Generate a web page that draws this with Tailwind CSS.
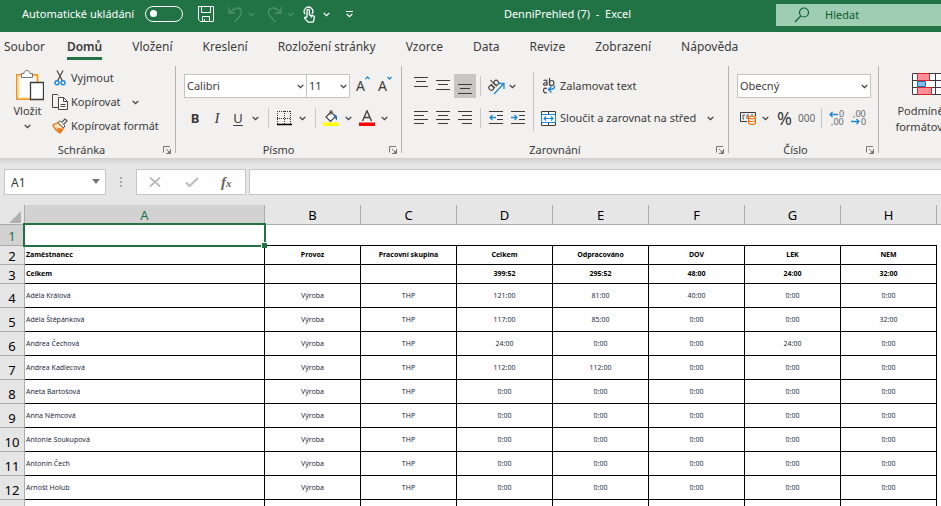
<!DOCTYPE html>
<html lang="cs">
<head>
<meta charset="utf-8">
<title>DenniPrehled (7) - Excel</title>
<script src="https://cdn.jsdelivr.net/npm/@tailwindcss/browser@4"></script>
</head>
<body class="h-screen overflow-hidden flex flex-col bg-[#e6e6e6] font-['Noto_Sans','Open_Sans',sans-serif] text-[11px] leading-4 text-[#3b3b3b]">
<svg class="hidden" aria-hidden="true">
  <symbol id="chev" viewBox="0 0 7 5"><path d="M.7 .9 3.5 3.6 6.3 .9" fill="none" stroke="currentColor" stroke-width="1.3"/></symbol>
  <symbol id="launch" viewBox="0 0 8 8"><path d="M.5 6.500V.5H7M3 3l4 4M7.500 3v4.500H3" fill="none" stroke="currentColor"/><path d="M7.500 4v3.500H4z" fill="currentColor"/></symbol>
</svg>

<header class="h-8 shrink-0 flex items-center bg-[#217346] text-white overflow-hidden">
  <div class="flex-1 flex items-center pl-[22px] pb-1 min-w-0">
    <label for="autosave" class="whitespace-nowrap w-[123px]">Automatické ukládání</label>
    <input id="autosave" type="checkbox" role="switch" class="appearance-none shrink-0 w-[38px] h-4 rounded-full border border-white before:block before:content-[''] before:size-[7px] before:rounded-full before:bg-white before:mt-[3px] before:ml-1">
    <button aria-label="Uložit" class="ml-[15px] shrink-0"><svg class="size-4" viewBox="0 0 16 16" fill="none" stroke="#fff"><path d="M.5.5h15v15H2.500L.5 13.500zM3.500.5v6h9v-6M4.500 15.500v-5h7v5M6.500 13v2.500"/></svg></button>
    <button aria-label="Zpět" class="ml-[14px] shrink-0 flex items-center gap-1 text-[#4d9169]"><svg class="w-4 h-[17px]" viewBox="0 0 16 17" fill="none" stroke="currentColor" stroke-width="1.300"><path d="M1 1v6h6M1.300 6.700C5 3.500 7 1.800 9.500 2c4 .3 5.300 4.500 3 7.500L6.500 16"/></svg><svg class="w-[7px] h-[5px]"><use href="#chev"/></svg></button>
    <button aria-label="Znovu" class="ml-3 shrink-0 flex items-center gap-1 text-[#4d9169]"><svg class="w-4 h-[17px]" viewBox="0 0 16 17" fill="none" stroke="currentColor" stroke-width="1.300"><path d="M14 1v6H8M13.700 6.700C11 3.500 8 1.800 5.500 2c-4 .3-5.300 4.500-3 7.500L8.500 16"/></svg><svg class="w-[7px] h-[5px]"><use href="#chev"/></svg></button>
    <button aria-label="Režim dotyku" class="ml-[9px] shrink-0 flex items-center gap-2"><svg class="w-3 h-[17px]" viewBox="0 0 12 17" fill="none" stroke="#fff" stroke-width="1.300"><path d="M2.200 8.200A4.300 4.300 0 1 1 9 8M4 11V4.600a1.200 1.200 0 0 1 2.400 0V9l4 .9c.8.2 1 .8.900 1.500l-.5 3.100c-.2 1-.6 1.700-1.700 1.700H6c-.8 0-1.300-.4-1.800-1L1.500 12c.6-1 1.600-1 2.500-.2M8.300 9.300v2.500"/></svg><svg class="w-[7px] h-[5px]"><use href="#chev"/></svg></button>
    <button aria-label="Přizpůsobit panel nástrojů" class="ml-4 shrink-0"><svg class="w-[7px] h-[7px]" viewBox="0 0 7 7" fill="none" stroke="#fff"><path d="M0 .5h7M.7 3l2.800 2.700L6.300 3" stroke-width="1.200"/></svg></button>
  </div>
  <h1 class="shrink-0 whitespace-pre w-[133px] text-center pb-1">DenniPrehled (7)  -  Excel</h1>
  <div class="w-[307px] shrink-0 flex justify-end">
    <div class="flex items-center w-[165px] h-[22px] bg-[#9fcdb3] text-[#0e5c2f] mb-[3px]">
      <svg class="w-4 h-4 ml-[18px]" viewBox="0 0 16 16" fill="none" stroke="currentColor" stroke-width="1.200"><circle cx="10" cy="5.500" r="4.500"/><path d="M6.800 8.800 1 15"/></svg>
      <input aria-label="Hledat" placeholder="Hledat" class="ml-[15px] w-24 bg-transparent outline-none placeholder:text-[#0e5c2f] placeholder:opacity-100">
    </div>
  </div>
</header>

<nav class="h-8 shrink-0 bg-[#f3f1f0] flex items-center gap-[30px] pl-1 pb-[2px] text-xs whitespace-nowrap">
  <a href="#" class="-mr-2">Soubor</a>
  <a href="#" class="font-semibold relative after:absolute after:content-[''] after:inset-x-0 after:top-[18px] after:h-[3px] after:bg-[#217346]">Domů</a>
  <a href="#">Vložení</a><a href="#">Kreslení</a><a href="#">Rozložení stránky</a><a href="#">Vzorce</a><a href="#">Data</a><a href="#">Revize</a><a href="#">Zobrazení</a><a href="#">Nápověda</a>
</nav>

<div class="shrink-0 flex bg-[#f3f1f0] pt-[2px] pb-[5px] h-[94px] whitespace-nowrap overflow-hidden">
  <!-- Schránka -->
  <section class="w-[176px] shrink-0 flex flex-col border-r border-[#b5b3b1]">
    <div class="h-[72px] shrink-0 flex">
      <button class="w-[52px] pl-[3px] pt-1 flex flex-col items-center">
        <svg class="w-7 h-[31px] ml-1" viewBox="0 0 28 31" fill="none"><path d="M2 5.500h20v23H2z" fill="#fdfdfd" stroke="#ffd98c" stroke-width="2.500"/><path d="M.6 4.600h20.800v24.800H.6z" stroke="#e8912d" stroke-width="1.200"/><path d="M5.500 7.500v-4H8C8 1.500 9.500.5 11 .5s3 1 3 3h2.500v4z" fill="#fff" stroke="#777"/><path d="M14.500 12.500h13v17h-13z" fill="#fff" stroke="#3b3b3b" stroke-width="1.300"/></svg>
        <span class="mt-[2px]">Vložit</span>
        <svg class="w-[7px] h-[5px] mt-[5px]"><use href="#chev"/></svg>
      </button>
      <div class="flex-1 flex flex-col">
        <button class="h-6 flex items-center"><svg class="w-[19px] h-4 shrink-0" viewBox="0 0 19 16" fill="none"><path d="M5 .5l5.500 10.500M11 .5 5.500 11" stroke="#555" stroke-width="1.400"/><circle cx="5" cy="12.800" r="2" stroke="#1e88d2" stroke-width="1.400"/><circle cx="11" cy="12.800" r="2" stroke="#1e88d2" stroke-width="1.400"/></svg>Vyjmout</button>
        <button class="h-6 flex items-center"><svg class="w-[19px] h-4 shrink-0" viewBox="0 0 19 16" fill="none" stroke="#444"><path d="M6 13.500H.5V.5h5l1 1"/><path d="M6.500 3.500h5l4 4v8h-9z" fill="#fff"/><path d="M11.500 3.500v4h4M8.500 10.500h5M8.500 12.500h5"/></svg>Kopírovat<svg class="w-[7px] h-[5px] ml-[11px]"><use href="#chev"/></svg></button>
        <button class="h-6 flex items-center"><svg class="w-[19px] h-4 shrink-0" viewBox="0 0 19 16" fill="none"><path d="m1 7 5-2.500 5.500 5.500L8 15C5 13 2 10.500 1 7z" fill="#ffe7bd" stroke="#e8720c" stroke-width="1.300"/><path d="m4.500 9.500 6 1.500L8 15z" fill="#e8720c"/><path d="m6 4.500 2-1.800L13 8l-1.500 2z" fill="#fff" stroke="#555"/><path d="M9.500 4.500 13 1l2 1.800-3.500 3.700" fill="#fff" stroke="#555" stroke-width="1.200"/></svg>Kopírovat formát</button>
      </div>
    </div>
    <footer class="flex shrink-0 items-center justify-between h-4 mt-1"><span class="flex-1 text-center pl-2 pr-4">Schránka</span><button aria-label="Schránka – možnosti" class="mr-1 -ml-2"><svg class="size-2 text-[#777]"><use href="#launch"/></svg></button></footer>
  </section>

  <!-- Písmo -->
  <section class="w-[226px] shrink-0 flex flex-col border-r border-[#b5b3b1]">
    <div class="h-[72px] shrink-0 pl-2 pt-2 flex flex-col gap-2">
      <div class="flex items-center h-6">
        <div class="relative"><select aria-label="Písmo" class="appearance-none block w-[123px] h-6 pl-[2px] bg-white border border-[#c6c4c2]"><option>Calibri</option></select><svg class="absolute right-[3px] top-[10px] w-[7px] h-[5px] pointer-events-none"><use href="#chev"/></svg></div>
        <div class="relative"><select aria-label="Velikost písma" class="appearance-none block w-[43px] h-6 pl-[2px] bg-white border border-l-0 border-[#c6c4c2]"><option>11</option></select><svg class="absolute right-[3px] top-[10px] w-[7px] h-[5px] pointer-events-none"><use href="#chev"/></svg></div>
        <button aria-label="Zvětšit písmo" class="ml-[6px] flex text-sm"><span>A</span><svg class="w-[5px] h-1" viewBox="0 0 5 4"><path d="M.5 3 2.500 1l2 2" fill="none" stroke="#1e88d2" stroke-width="1.300"/></svg></button>
        <button aria-label="Zmenšit písmo" class="ml-[8px] flex text-sm"><span>A</span><svg class="w-[5px] h-1" viewBox="0 0 5 4"><path d="M.5 1l2 2 2-2" fill="none" stroke="#1e88d2" stroke-width="1.300"/></svg></button>
      </div>
      <div class="flex items-center h-6 text-[13px]">
        <button class="w-[22px] font-bold">B</button>
        <button class="w-[22px] italic font-['Liberation_Serif',serif] text-[15px]">I</button>
        <button class="w-[20px] underline underline-offset-2">U</button>
        <button aria-label="Podtržení" class="ml-1"><svg class="w-[7px] h-[5px]"><use href="#chev"/></svg></button>
        <i class="w-px h-5 bg-[#c9c7c5] ml-[9px]"></i>
        <button aria-label="Ohraničení" class="ml-[7px] flex items-center gap-[7px]"><svg class="size-4" viewBox="0 0 16 16" fill="none" stroke="#333"><path d="M1 1.500h14M1 8.500h14M1.500 1v13M8.500 1v13M14.500 1v13" stroke-dasharray="1 1"/><path d="M1 14.500h15" stroke="#000" stroke-width="1.500"/></svg><svg class="w-[7px] h-[5px]"><use href="#chev"/></svg></button>
        <i class="w-px h-5 bg-[#c9c7c5] ml-[9px]"></i>
        <button aria-label="Barva výplně" class="ml-[7px] flex items-center gap-[6px]"><svg class="w-4 h-4" viewBox="0 0 16 16" fill="none"><path d="m3 7 5-5 4.500 4.500-5 5z" fill="#fff" stroke="#444" stroke-width="1.200"/><path d="M7 5V1.500C7 .3 9 .3 9 1.500v2" stroke="#444"/><path d="M11 4.500c3 0 4 3 2.500 6-1 0-.5-3-2.500-4z" fill="#1e6fb8"/><path d="M0 12.500h16v3.500H0z" fill="#ff0"/></svg><svg class="w-[7px] h-[5px]"><use href="#chev"/></svg></button>
        <button aria-label="Barva písma" class="ml-[7px] flex items-center gap-[6px]"><svg class="w-4 h-4" viewBox="0 0 16 16" fill="none"><path d="M3.500 11 8 .8 12.500 11M5 7.500h6" stroke="#444" stroke-width="1.400"/><path d="M0 12.500h16v3.500H0z" fill="#f00"/></svg><svg class="w-[7px] h-[5px]"><use href="#chev"/></svg></button>
      </div>
    </div>
    <footer class="flex shrink-0 items-center h-4 mt-1"><span class="flex-1 text-center pr-4">Písmo</span><button aria-label="Písmo – možnosti" class="mr-1 -ml-2"><svg class="size-2 text-[#777]"><use href="#launch"/></svg></button></footer>
  </section>

  <!-- Zarovnání -->
  <section class="w-[327px] shrink-0 flex flex-col border-r border-[#b5b3b1]">
    <div class="h-[72px] shrink-0 flex">
      <div class="w-[132px] h-[66px] flex flex-col gap-2 pl-2 pt-2 relative after:absolute after:content-[''] after:right-0 after:top-[6px] after:h-[59px] after:w-px after:bg-[#c9c7c5]">
        <div class="flex items-center h-6 shrink-0">
          <button aria-label="Zarovnat nahoru" class="w-[22px] h-6 flex justify-center"><svg class="w-[14px] h-6" viewBox="0 0 14 24" stroke="#3b3b3b"><path d="M0 3.500h14M2 7.500h10M0 12.500h14"/></svg></button>
          <button aria-label="Zarovnat na střed svisle" class="w-[22px] h-6 flex justify-center"><svg class="w-[14px] h-6" viewBox="0 0 14 24" stroke="#3b3b3b"><path d="M0 6.500h14M2 10.500h10M0 15.500h14"/></svg></button>
          <button aria-label="Zarovnat dolů" aria-pressed="true" class="w-[22px] h-6 flex justify-center bg-[#c8c6c4]"><svg class="w-[14px] h-6" viewBox="0 0 14 24" stroke="#3b3b3b"><path d="M0 10.500h14M2 14.500h10M0 19.500h14"/></svg></button>
          <i class="w-px h-5 bg-[#c9c7c5] ml-1"></i>
          <button aria-label="Orientace" class="ml-[7px] flex items-center gap-1"><svg class="w-[17px] h-[17px] overflow-visible" viewBox="0 0 17 17"><g transform="rotate(-45 6 7)" fill="none" stroke="#444" stroke-width="1.100"><ellipse cx="2" cy="7" rx="2.200" ry="2.500"/><path d="M4.500 4v6"/><path d="M7 1v9"/><ellipse cx="9.300" cy="7" rx="2.200" ry="2.500"/></g><path d="M6 16 15.500 6M10.500 5.500h5.500V11" fill="none" stroke="#1e88d2" stroke-width="1.300"/></svg><svg class="w-[7px] h-[5px]"><use href="#chev"/></svg></button>
        </div>
        <div class="flex items-center h-6 shrink-0">
          <button aria-label="Zarovnat vlevo" class="w-[22px] flex justify-center"><svg class="w-[14px] h-[14px]" viewBox="0 0 14 14" stroke="#3b3b3b"><path d="M0 .5h14M0 4.500h10M0 8.500h14M0 12.500h10"/></svg></button>
          <button aria-label="Na střed" class="w-[22px] flex justify-center"><svg class="w-[14px] h-[14px]" viewBox="0 0 14 14" stroke="#3b3b3b"><path d="M0 .5h14M2 4.500h10M0 8.500h14M2 12.500h10"/></svg></button>
          <button aria-label="Zarovnat vpravo" class="w-[22px] flex justify-center"><svg class="w-[14px] h-[14px]" viewBox="0 0 14 14" stroke="#3b3b3b"><path d="M0 .5h14M4 4.500h10M0 8.500h14M4 12.500h10"/></svg></button>
          <i class="w-px h-5 bg-[#c9c7c5] ml-1"></i>
          <button aria-label="Zmenšit odsazení" class="ml-2"><svg class="w-[14px] h-[14px]" viewBox="0 0 14 14" fill="none" stroke="#3b3b3b"><path d="M0 .5h14M8 4.500h6M8 8.500h6M0 12.500h14"/><path d="M1 6.500h6M3.500 4 1 6.500 3.500 9" stroke="#1e88d2" stroke-width="1.300"/></svg></button>
          <button aria-label="Zvětšit odsazení" class="ml-2"><svg class="w-[14px] h-[14px]" viewBox="0 0 14 14" fill="none" stroke="#3b3b3b"><path d="M0 .5h14M8 4.500h6M8 8.500h6M0 12.500h14"/><path d="M0 6.500h6M3.500 4 6 6.500 3.500 9" stroke="#1e88d2" stroke-width="1.300"/></svg></button>
        </div>
      </div>
      <div class="flex-1 flex flex-col gap-2 pl-[7px] pt-2">
        <button class="flex items-center h-6"><svg class="w-[15px] h-4 shrink-0 mr-1" viewBox="0 0 15 16" fill="none" stroke="#444" stroke-width="1.200"><path d="M2.500 2.500c3-.8 3.500 0 3.500 1.500v3.500M6 4.500c-2 .2-3.500.3-3.500 1.700 0 1.600 3 1.400 3.500-.5M8.500 0v7.500"/><ellipse cx="10.700" cy="5" rx="2.200" ry="2.500"/><path d="M6 10.500C4 9.500 2.500 10.500 2.500 12.500s1.500 3 3.500 2"/><path d="M13.500 7.500c.5 3-1 4-6 4M10.500 8.500l-3 3 3 3" stroke="#1e88d2" stroke-width="1.400"/></svg>Zalamovat text</button>
        <button class="flex items-center h-6"><svg class="w-[15px] h-[15px] shrink-0 mr-1" viewBox="0 0 15 15" fill="none"><path d="M.5.5h14v14H.5zM7.500 0v3M7.500 12v3" fill="#fff" stroke="#3b3b3b"/><path d="M.5 3.500h14v8H.5z" fill="#fff" stroke="#1e88d2"/><path d="M3 7.500h9M5 5.500l-2 2 2 2M10 5.500l2 2-2 2" stroke="#1e88d2" stroke-width="1.200"/></svg>Sloučit a zarovnat na střed<svg class="w-[7px] h-[5px] ml-[11px]"><use href="#chev"/></svg></button>
      </div>
    </div>
    <footer class="flex shrink-0 items-center h-4 mt-1"><span class="flex-1 text-center pr-4">Zarovnání</span><button aria-label="Zarovnání – možnosti" class="mr-1 -ml-2"><svg class="size-2 text-[#777]"><use href="#launch"/></svg></button></footer>
  </section>

  <!-- Číslo -->
  <section class="w-[150px] shrink-0 flex flex-col border-r border-[#b5b3b1]">
    <div class="h-[72px] shrink-0 pl-2 pt-2 flex flex-col gap-2">
      <div class="relative w-[134px]"><select aria-label="Formát čísla" class="appearance-none block w-full h-6 pl-[2px] bg-white border border-[#c6c4c2]"><option>Obecný</option></select><svg class="absolute right-[3px] top-[10px] w-[7px] h-[5px] pointer-events-none"><use href="#chev"/></svg></div>
      <div class="flex items-center h-6">
        <button aria-label="Účetní formát" class="ml-[3px] flex items-center gap-[6px]"><svg class="w-4 h-[14px]" viewBox="0 0 16 14" fill="none"><path d="M.5 10.500v-9h15V5M.5 10.500H7" stroke="#3b3b3b"/><path d="M5 4H3v4h1M9 4H7v4M13 4h-2" stroke="#555"/><path d="M8.500 6.500v5c0 2.500 7 2.500 7 0v-5z" fill="#fff" stroke="#e8720c" stroke-width="1.200"/><ellipse cx="12" cy="6.500" rx="3.500" ry="1.300" fill="#fff" stroke="#e8720c" stroke-width="1.200"/><path d="M8.500 9c0 2 7 2 7 0" stroke="#e8720c" stroke-width="1.200"/></svg><svg class="w-[7px] h-[5px]"><use href="#chev"/></svg></button>
        <button aria-label="Procenta" class="ml-2 text-lg leading-6">%</button>
        <button aria-label="Oddělovač tisíců" class="ml-[6px] text-[10px] text-[#666] w-4">000</button>
        <i class="w-px h-5 bg-[#c9c7c5] ml-[7px]"></i>
        <button aria-label="Přidat desetinné místo" class="ml-[7px]"><svg class="w-4 h-4 overflow-visible" viewBox="0 0 16 16" font-family="Noto Sans" font-size="9" fill="#666"><text x="10" y="7">0</text><text x="2" y="15">,00</text><path d="M1 4.500h8M3.500 2 1 4.500 3.500 7" fill="none" stroke="#1e88d2" stroke-width="1.300"/></svg></button>
        <button aria-label="Odebrat desetinné místo" class="ml-[6px]"><svg class="w-4 h-4 overflow-visible" viewBox="0 0 16 16" font-family="Noto Sans" font-size="9" fill="#666"><text x="2" y="7">,00</text><text x="10" y="15">0</text><path d="M0 11.500h8M5.500 9 8 11.500 5.500 14" fill="none" stroke="#1e88d2" stroke-width="1.300"/></svg></button>
      </div>
    </div>
    <footer class="flex shrink-0 items-center h-4 mt-1"><span class="flex-1 text-center pr-3">Číslo</span><button aria-label="Číslo – možnosti" class="mr-1 -ml-2"><svg class="size-2 text-[#777]"><use href="#launch"/></svg></button></footer>
  </section>

  <section class="flex-1 min-w-0 overflow-hidden">
    <button class="w-24 pt-[7px] flex flex-col items-center">
      <svg class="w-[30px] h-[22px]" viewBox="0 0 30 22" fill="#fff" stroke="#3b3b3b"><path d="M.5.5h29v21H.5zM.5 7.500h29M.5 14.500h29M5.500.5v21M23.500.5v21"/><path d="M5.500.5h12v7h-12zM5.500 14.500h14v7h-14z" fill="#ff8f96" stroke="#d8262c"/><path d="M5.500 8.500h8v5h-8z" fill="#84bdf0" stroke="#1e6fb8"/></svg>
      <span class="mt-2">Podmíněné</span><span>formátování</span>
    </button>
  </section>
</div>

<div class="shrink-0 h-[47px] pt-[11px] flex items-start bg-linear-to-b from-[#cfcfcf] to-[#e6e6e6] to-15%">
  <div class="relative ml-1"><input aria-label="Pole názvů" value="A1" class="block w-[102px] h-[26px] bg-white border border-[#c6c6c6] pl-[6px] text-xs"><svg class="absolute right-[6px] top-[10px] w-2 h-[5px]" viewBox="0 0 8 5"><path d="M0 0h8L4 5z" fill="#777"/></svg></div>
  <svg class="w-[30px] h-[26px]" viewBox="0 0 30 26" fill="#a8a8a8"><path d="M14 8h2v2h-2zM14 12h2v2h-2zM14 16h2v2h-2z"/></svg>
  <div class="w-[110px] h-[26px] bg-white border border-[#c6c6c6] flex items-center">
    <button aria-label="Zrušit" class="ml-3"><svg class="w-3 h-[10px]" viewBox="0 0 12 10"><path d="m1 .5 10 9M11 .5l-10 9" stroke="#b9b9b9" stroke-width="1.800"/></svg></button>
    <button aria-label="Zadat" class="ml-6"><svg class="w-[14px] h-[10px]" viewBox="0 0 14 10" fill="none"><path d="M1 5.500 4.500 9 13 1" stroke="#c0c0c0" stroke-width="2.400"/></svg></button>
    <button aria-label="Vložit funkci" class="ml-[22px] font-['Liberation_Serif',serif] italic font-bold text-[15px] text-[#666]">f<span class="text-[11px]">x</span></button>
  </div>
  <input aria-label="Řádek vzorců" class="flex-1 min-w-0 h-[26px] ml-[3px] bg-white border border-r-0 border-[#c6c6c6]">
</div>

<main class="flex-1 min-h-0 overflow-hidden bg-white">
  <table class="table-fixed w-full border-separate border-spacing-0 font-['Noto_Sans',sans-serif] text-[7px] leading-3 text-[#1b2a41]">
    <colgroup><col class="w-[25px]"><col class="w-60"><col class="w-24"><col class="w-24"><col class="w-24"><col class="w-24"><col class="w-24"><col class="w-24"><col class="w-24"><col></colgroup>
    <thead id="head"></thead>
    <tbody id="rows"></tbody>
  </table>
</main>

<script>
const letterCell = "h-5 p-0 bg-[#e6e6e6] border-r border-b border-[#ababab] font-normal text-[13px] leading-4 text-black";
const letterActive = "h-5 p-0 bg-[#d2d2d2] border-r border-b border-[#ababab] font-normal text-[13px] leading-4 text-[#217346]";
const numCell = "p-0 pt-[2px] bg-[#e6e6e6] border-r border-b border-[#ababab] font-normal text-[13px] leading-3 text-black";
const numActive = "p-0 pt-[2px] bg-[#d2d2d2] border-r border-b border-[#ababab] font-normal text-[13px] leading-3 text-[#217346]";
document.getElementById("head").innerHTML =
  `<tr><th class="${letterCell}" aria-label="Vybrat vše"><svg class="w-3 h-3 ml-[9px] mt-1" viewBox="0 0 12 12"><path d="M12 0v12H0z" fill="#b1b1b1"/></svg></th>` +
  [..."ABCDEFGH"].map((c, i) => `<th scope="col" class="${i ? letterCell : letterActive}">${c}</th>`).join("") +
  `<th class="h-5 p-0 bg-[#e6e6e6] border-b border-[#ababab]"></th></tr>`;

const z = "0:00";
const data = [
  ["Zaměstnanec","Provoz","Pracovní skupina","Celkem","Odpracováno","DOV","LEK","NEM"],
  ["Celkem","","","399:52","295:52","48:00","24:00","32:00"],
  ["Adéla Králová","Výroba","THP","121:00","81:00","40:00",z,z],
  ["Adéla Štěpánková","Výroba","THP","117:00","85:00",z,z,"32:00"],
  ["Andrea Čechová","Výroba","THP","24:00",z,z,"24:00",z],
  ["Andrea Kadlecová","Výroba","THP","112:00","112:00",z,z,z],
  ["Aneta Bartošová","Výroba","THP",z,z,z,z,z],
  ["Anna Němcová","Výroba","THP",z,z,z,z,z],
  ["Antonie Soukupová","Výroba","THP",z,z,z,z,z],
  ["Antonín Čech","Výroba","THP",z,z,z,z,z],
  ["Arnošt Holub","Výroba","THP",z,z,z,z,z],
  ["","","","","","","",""]
];
const selected = `<td class="relative p-0 border-b border-black"><div class="absolute -left-[2px] -top-[2px] -right-[1px] -bottom-[2px] border-2 border-[#217346]"></div><div class="absolute -right-[2px] -bottom-[3px] size-[6px] bg-[#217346] border-t border-l border-white"></div></td>`;
let html = `<tr class="h-[21px]"><th scope="row" class="${numActive}">1</th>${selected}` +
  `<td class="p-0 border-b border-black"></td>`.repeat(7) + `<td class="p-0"></td></tr>`;
data.forEach((r, i) => {
  const bold = i < 2;
  html += `<tr class="${bold ? "h-[19px] font-bold text-black" : "h-6"}"><th scope="row" class="${numCell}${bold ? "" : " align-bottom pb-[3px]"}">${i < 11 ? i + 2 : ""}</th>` +
    r.map((c, j) => `<td class="p-0 border-r border-b border-black ${j ? "text-center" : "pl-px text-left"}">${c}</td>`).join("") +
    `<td class="p-0"></td></tr>`;
});
document.getElementById("rows").innerHTML = html;
</script>
</body>
</html>
